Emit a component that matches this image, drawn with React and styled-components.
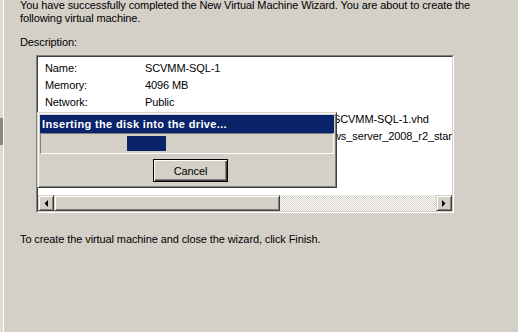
import React from 'react';
import styled, { createGlobalStyle } from 'styled-components';

const GlobalStyle = createGlobalStyle`
  html, body {
    margin: 0;
    padding: 0;
    background: #d4d0c8;
  }
  body {
    font-family: "Liberation Sans", Arial, sans-serif;
    font-size: 11px;
    letter-spacing: -0.1px;
    color: #000;
  }
`;

const Page = styled.div`
  display: flex;
  width: 518px;
  height: 332px;
  overflow: hidden;
`;

const Edge = styled.div`
  width: 3px;
  flex-shrink: 0;
  background: #dedbd6;
  border-right: 1px solid #ffffff;
`;

const Grip = styled.div`
  margin-top: 118px;
  height: 27px;
  background: #8a8884;
`;

const Content = styled.div`
  flex: 1;
  padding: 0 0 0 16px;
`;

const Para = styled.p`
  margin: ${(p) => p.$top || 0}px 0 0 0;
  line-height: 13px;
  width: 470px;
`;

const ListWrap = styled.div`
  position: relative;
  margin: 6px 0 0 16px;
  width: 416px;
  height: 156px;
  border-top: 1px solid #808080;
  border-left: 1px solid #808080;
  border-right: 1px solid #ffffff;
  border-bottom: 1px solid #ffffff;
`;

const ListInner = styled.div`
  display: flex;
  flex-direction: column;
  height: 100%;
  box-sizing: border-box;
  background: #fff;
  border-top: 1px solid #404040;
  border-left: 1px solid #404040;
  border-right: 1px solid #d4d0c8;
  border-bottom: 1px solid #d4d0c8;
`;

const Rows = styled.div`
  flex: 1;
  overflow: hidden;
  padding: 3px 0 0 7px;
`;

const Row = styled.div`
  display: flex;
  height: 17px;
  line-height: 17px;
  white-space: nowrap;
  padding-left: ${(p) => p.$indent || 0}px;
`;

const Label = styled.span`
  width: 100px;
  flex-shrink: 0;
`;

const ScrollBar = styled.div`
  display: flex;
  height: 16px;
  flex-shrink: 0;
  background-color: #fff;
  background-image: repeating-conic-gradient(#d4d0c8 0 25%, #fff 0 50%);
  background-size: 2px 2px;
`;

const Raised = styled.div`
  box-sizing: border-box;
  height: 16px;
  background: #d4d0c8;
  border-top: 1px solid #d4d0c8;
  border-left: 1px solid #d4d0c8;
  border-right: 1px solid #404040;
  border-bottom: 1px solid #404040;
  box-shadow: inset 1px 1px 0 #fff, inset -1px -1px 0 #808080;
  display: flex;
  align-items: center;
  justify-content: center;
  width: ${(p) => p.$w}px;
  flex-shrink: 0;
`;

const Track = styled.div`
  flex: 1;
`;

const Dialog = styled.div`
  position: absolute;
  left: 0;
  top: 56px;
  width: 300px;
  height: 76px;
  box-sizing: border-box;
  background: #d4d0c8;
  border-top: 1px solid #d4d0c8;
  border-left: 1px solid #d4d0c8;
  border-right: 1px solid #404040;
  border-bottom: 1px solid #404040;
  box-shadow: inset 1px 1px 0 #fff, inset -1px -1px 0 #808080;
  padding: 2px;
  display: flex;
  flex-direction: column;
`;

const TitleBar = styled.div`
  height: 18px;
  flex-shrink: 0;
  background: #0a246a;
  color: #fff;
  font-weight: bold;
  letter-spacing: 0.35px;
  line-height: 18px;
  padding-left: 2px;
  white-space: nowrap;
`;

const Progress = styled.div`
  height: 21px;
  flex-shrink: 0;
  box-sizing: border-box;
  border-top: 1px solid #808080;
  border-left: 1px solid #808080;
  border-right: 1px solid #fff;
  border-bottom: 1px solid #fff;
  padding: 2px 0 0 86px;
`;

const Chunk = styled.div`
  width: 39px;
  height: 15px;
  background: #0a246a;
`;

const ButtonRow = styled.div`
  display: flex;
  justify-content: flex-start;
  padding: 5px 0 0 113px;
`;

const Button = styled.button`
  width: 75px;
  height: 23px;
  box-sizing: border-box;
  padding: 0;
  font-family: inherit;
  font-size: 11px;
  letter-spacing: inherit;
  color: #000;
  background: #d4d0c8;
  border: 1px solid #000;
  box-shadow: inset 1px 1px 0 #fff, inset -1px -1px 0 #404040, inset -2px -2px 0 #808080;
`;

const Arrow = ({ dir }) => (
  <svg width="4" height="7" viewBox="0 0 4 7">
    {dir === 'left' ? (
      <polygon points="4,0 4,7 0.5,3.5" fill="#000" />
    ) : (
      <polygon points="0,0 0,7 3.5,3.5" fill="#000" />
    )}
  </svg>
);

const rows = [
  ['Name:', 'SCVMM-SQL-1'],
  ['Memory:', '4096 MB'],
  ['Network:', 'Public'],
];

// rows partly hidden under the progress dialog: only their tail shows
const hiddenRows = ['SCVMM-SQL-1.vhd', 'ws_server_2008_r2_standard.iso'];

export default function App() {
  return (
    <>
      <GlobalStyle />
      <Page>
        <Edge>
          <Grip />
        </Edge>
        <Content>
          <Para $top={-1}>
            You have successfully completed the New Virtual Machine Wizard. You are about to create the
            following virtual machine.
          </Para>
          <Para $top={11}>Description:</Para>
          <ListWrap>
            <ListInner>
              <Rows>
                {rows.map(([k, v]) => (
                  <Row key={k}>
                    <Label>{k}</Label>
                    <span>{v}</span>
                  </Row>
                ))}
                {hiddenRows.map((v) => (
                  <Row key={v} $indent={288}>
                    <span>{v}</span>
                  </Row>
                ))}
              </Rows>
              <ScrollBar>
                <Raised $w={16}><Arrow dir="left" /></Raised>
                <Raised $w={226} />
                <Track />
                <Raised $w={16}><Arrow dir="right" /></Raised>
              </ScrollBar>
            </ListInner>
            <Dialog>
              <TitleBar>Inserting the disk into the drive...</TitleBar>
              <Progress>
                <Chunk />
              </Progress>
              <ButtonRow>
                <Button>Cancel</Button>
              </ButtonRow>
            </Dialog>
          </ListWrap>
          <Para $top={20}>To create the virtual machine and close the wizard, click Finish.</Para>
        </Content>
      </Page>
    </>
  );
}
